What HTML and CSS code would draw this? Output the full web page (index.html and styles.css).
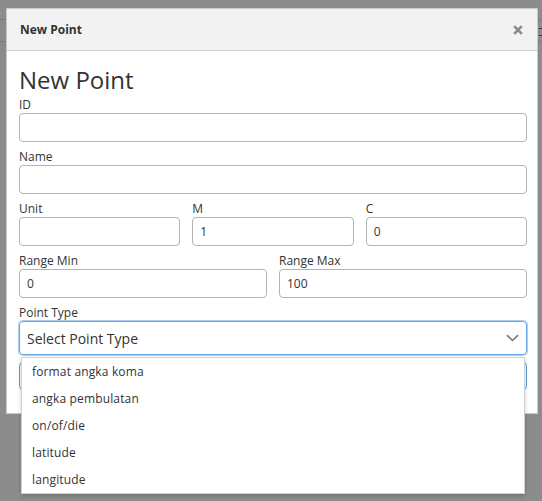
FILE: index.html
```html
<!DOCTYPE html>
<html>
<head>
<meta charset="utf-8">
<link rel="stylesheet" href="styles.css">
</head>
<body>
<div class="page">
  <div class="page-line l1"></div>
  <div class="page-line l2"></div>
  <div class="page-icon"></div>
</div>
<div class="modal">
  <div class="modal-header">
    <span class="modal-title">New Point</span>
    <svg class="close" width="10" height="10" viewBox="0 0 10 10"><path d="M1.2 1.2L8.8 8.8M8.8 1.2L1.2 8.8" stroke="#8a8a8a" stroke-width="2.6" stroke-linecap="butt"/></svg>
  </div>
  <div class="modal-body">
    <h2 class="heading">New Point</h2>
    <div class="group">
      <label class="label">ID</label>
      <div class="input"></div>
    </div>
    <div class="group">
      <label class="label">Name</label>
      <div class="input"></div>
    </div>
    <div class="row three">
      <div class="group">
        <label class="label">Unit</label>
        <div class="input"></div>
      </div>
      <div class="group">
        <label class="label">M</label>
        <div class="input">1</div>
      </div>
      <div class="group">
        <label class="label">C</label>
        <div class="input">0</div>
      </div>
    </div>
    <div class="row two">
      <div class="group">
        <label class="label">Range Min</label>
        <div class="input">0</div>
      </div>
      <div class="group">
        <label class="label">Range Max</label>
        <div class="input">100</div>
      </div>
    </div>
    <div class="group select-group">
      <label class="label">Point Type</label>
      <div class="select">
        <span>Select Point Type</span>
        <svg class="chevron" width="13" height="8" viewBox="0 0 13 8"><path d="M1 1.2L6.5 6.5L12 1.2" fill="none" stroke="#777" stroke-width="1.6"/></svg>
      </div>
      <ul class="dropdown">
        <li>format angka koma</li>
        <li>angka pembulatan</li>
        <li>on/of/die</li>
        <li>latitude</li>
        <li>langitude</li>
      </ul>
    </div>
    <div class="hidden-field"></div>
  </div>
</div>
</body>
</html>
```
FILE: styles.css
```css
html, body {
  margin: 0;
  padding: 0;
}
body {
  width: 542px;
  height: 501px;
  background: #8c8c8c;
  font-family: "Open Sans", "Liberation Sans", sans-serif;
  color: #333;
  position: relative;
  overflow: hidden;
}
.page {
  height: 501px;
}
.page-line {
  position: absolute;
  left: 0;
  width: 542px;
  height: 1px;
  background: #7d7d7d;
}
.l1 { top: 19px; }
.l2 { top: 41px; }
.page-icon {
  position: absolute;
  left: 539px;
  top: 28px;
  width: 4px;
  height: 6px;
  border-top: 1px solid #2a3a55;
  border-bottom: 1px solid #2a3a55;
}
.modal {
  position: absolute;
  left: 6px;
  top: 8px;
  width: 530px;
  background: #fff;
  border: 1px solid #c8c8c8;
}
.modal-header {
  height: 41px;
  background: #f2f2f2;
  border-bottom: 1px solid #cfcfcf;
  display: flex;
  align-items: center;
  justify-content: space-between;
  padding: 0 14px 0 13px;
}
.modal-title {
  font-size: 12px;
  font-weight: 700;
  color: #333;
}
.close {
  display: block;
}
.modal-body {
  padding: 14px 10px 23px 12px;
}
.heading {
  margin: 0 0 2px 0;
  font-size: 24px;
  line-height: 29px;
  font-weight: 400;
  color: #333;
}
.group {
  margin-bottom: 6px;
}
.label {
  display: block;
  font-size: 12px;
  line-height: 17px;
  color: #333;
}
.input {
  box-sizing: border-box;
  height: 29px;
  border: 1px solid #b3b3b3;
  border-radius: 4px;
  font-size: 12px;
  line-height: 27px;
  padding: 0 7px;
  color: #333;
}
.row {
  display: grid;
  column-gap: 12px;
}
.row.three { grid-template-columns: 1fr 1fr 1fr; }
.row.two { grid-template-columns: 1fr 1fr; }
.select-group {
  position: relative;
  margin-bottom: 7px;
}
.select {
  box-sizing: border-box;
  height: 34px;
  border: 1px solid #66a8e8;
  box-shadow: 0 0 0 1px rgba(102, 168, 232, 0.55);
  border-radius: 4px;
  display: flex;
  align-items: center;
  justify-content: space-between;
  padding: 0 7px 0 7px;
  font-size: 14px;
  color: #333;
}
.chevron {
  display: block;
}
.dropdown {
  position: absolute;
  left: 2px;
  right: 2px;
  top: 53px;
  margin: 0;
  padding: 0;
  list-style: none;
  background: #fff;
  border: 1px solid #d0d0d0;
  box-shadow: 0 2px 4px rgba(0, 0, 0, 0.18);
  z-index: 2;
}
.dropdown li {
  height: 27px;
  line-height: 27px;
  font-size: 12px;
  padding-left: 10px;
  color: #333;
  letter-spacing: 0.15px;
}
.hidden-field {
  height: 28px;
  box-sizing: border-box;
  border: 1px solid #5b9bd5;
  border-radius: 4px;
}
```
